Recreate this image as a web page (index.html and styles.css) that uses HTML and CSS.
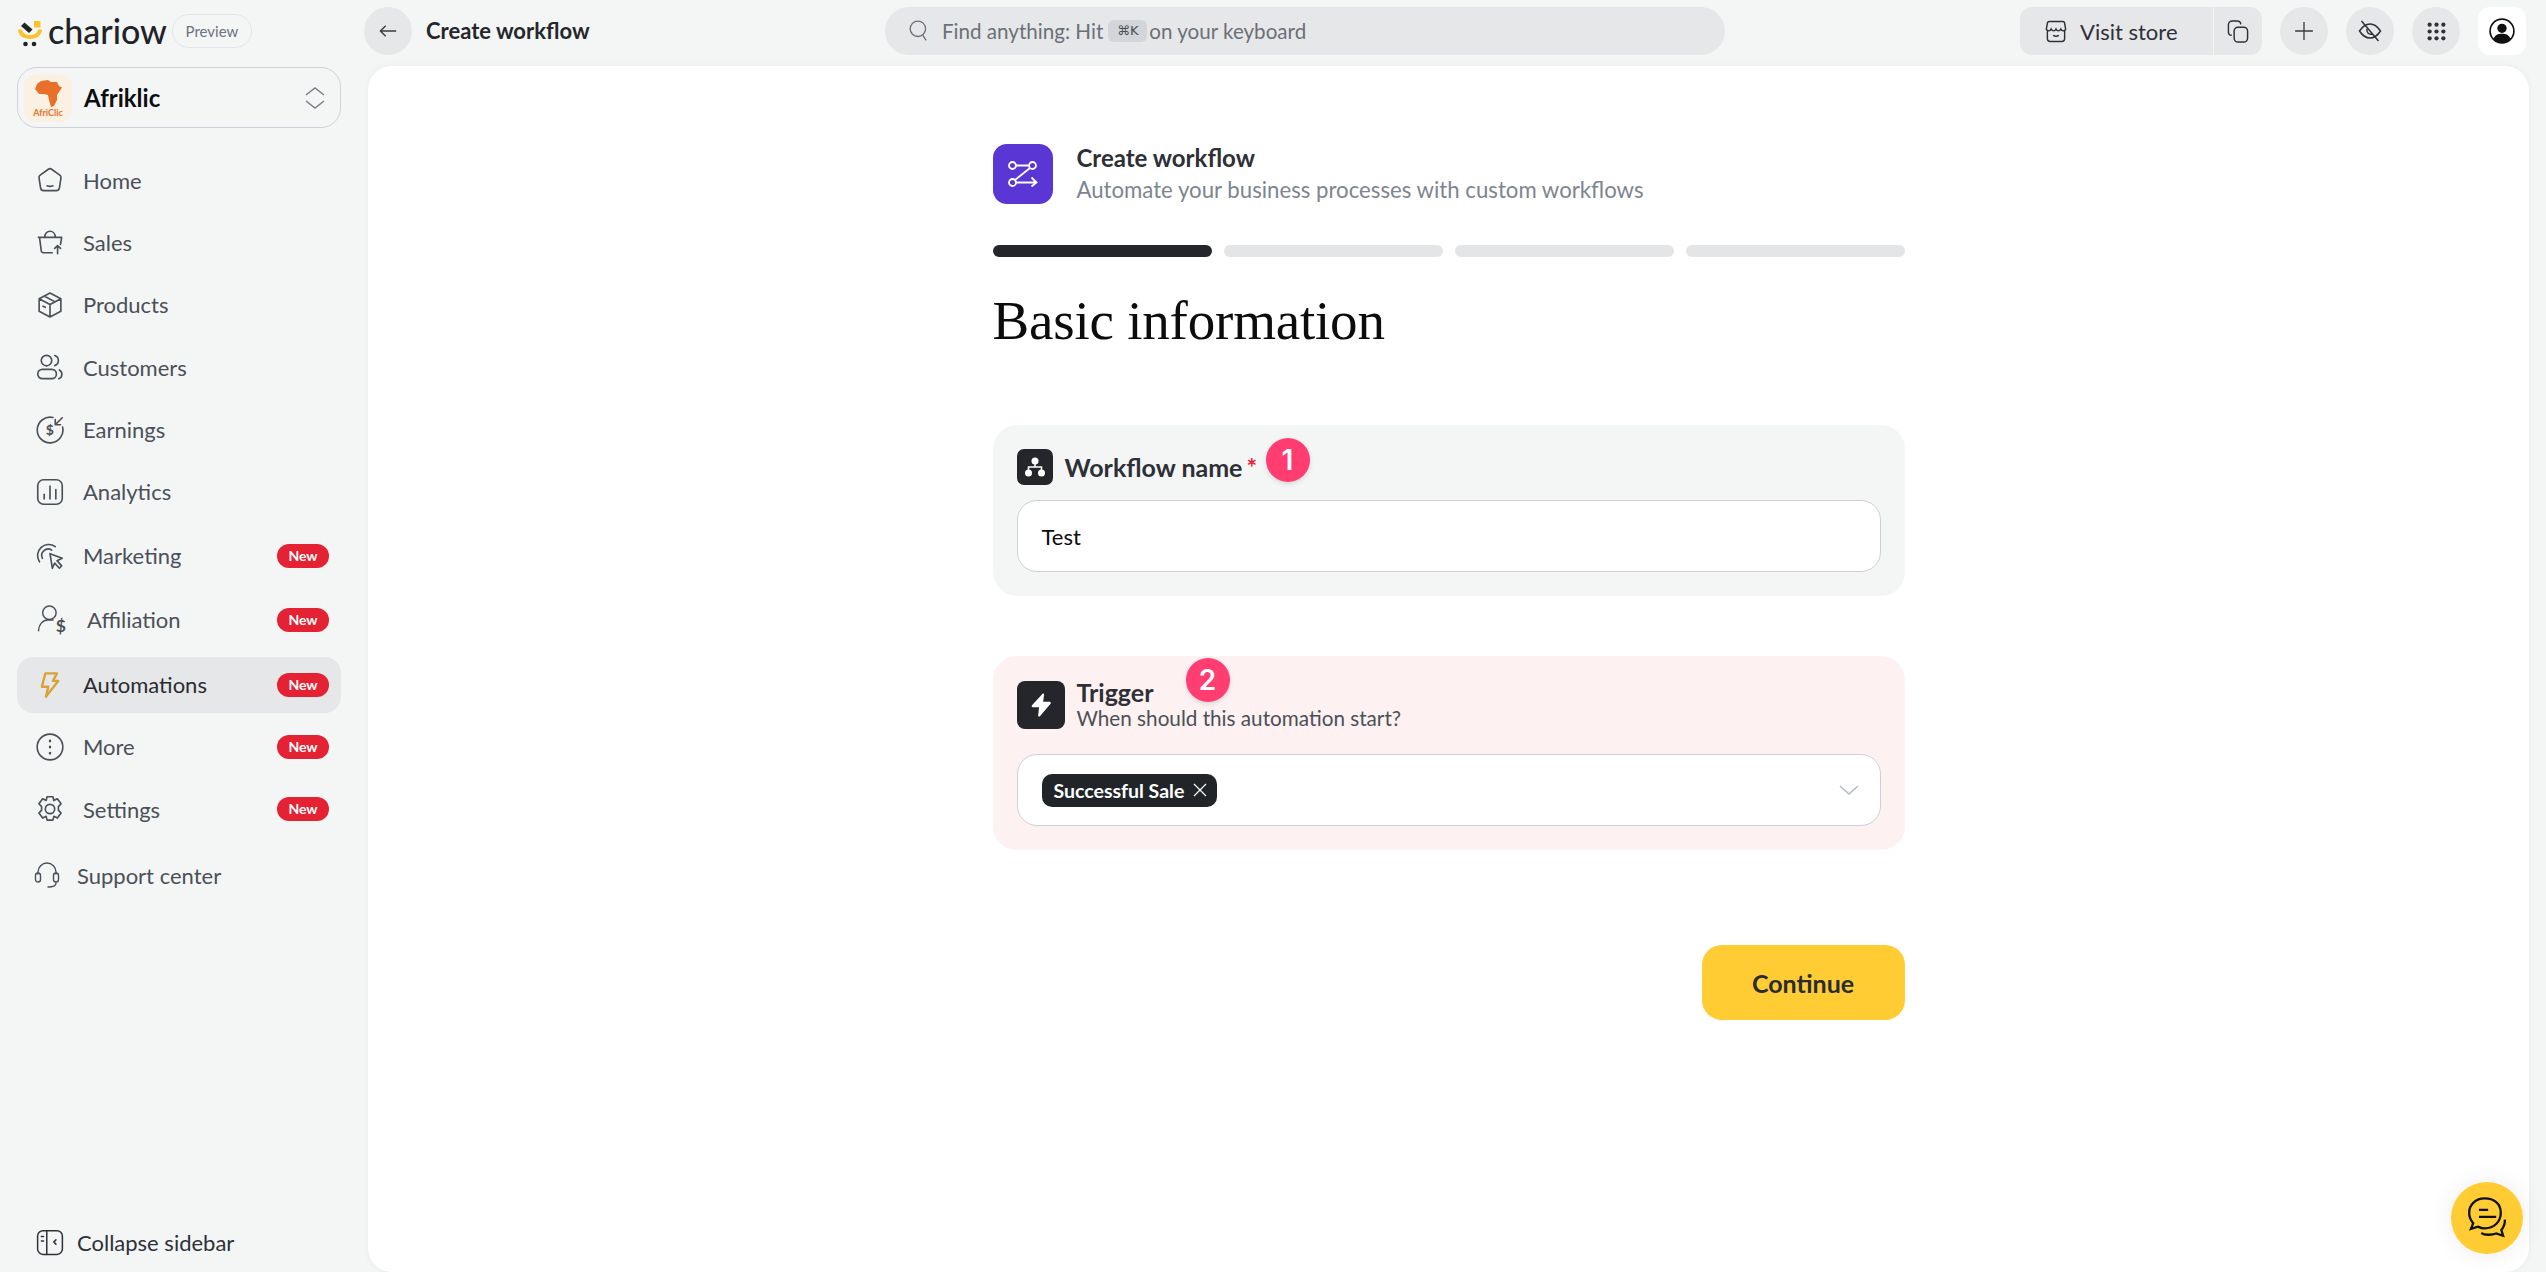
FILE: index.html
```html
<!DOCTYPE html>
<html>
<head>
  <title>Create workflow</title>
  <link rel="stylesheet" href="styles.css">
</head>
<body>
  <div class="app">
    <aside class="sidebar">
      <div class="brand">
        <svg class="brand-mark" viewBox="0 0 26 27">
          <path d="M1 9.500c.5 6 5 9.500 12 9.500s11.500-3.500 12-9.500h-4c-.5 3.500-3.500 5.500-8 5.500s-7.500-2-8-5.500z" fill="#fac32d"/>
          <rect x="17" y="1" width="6.500" height="6.500" fill="#fac32d"/>
          <path d="M4 6l3.500-3.500 8 7-3.500 3.500z" fill="#212327"/>
          <circle cx="8.500" cy="24" r="2.300" fill="#212327"/>
          <circle cx="17" cy="24" r="2.300" fill="#212327"/>
        </svg>
        <span class="brand-name">chariow</span>
        <span class="preview">Preview</span>
      </div>

      <div class="store-switch">
        <div class="store-logo">
          <svg viewBox="0 0 48 48" class="africa">
            <path d="M17 7l7-1 3 2 6 0 2 4 3 1.500-3 4.500-2 3v5l-3 6-3 1-2-7-1-5-4-1-5 0-4-5 2-5z" fill="#e8702a"/>
          </svg>
          <span class="store-logo-text">AfriClic</span>
        </div>
        <span class="store-name">Afriklic</span>
        <svg class="updown" viewBox="0 0 22 24"><path d="M2 9l9-7 9 7M2 15l9 7 9-7"/></svg>
      </div>

      <nav class="nav">
        <a class="nav-item">
          <svg class="icon" viewBox="0 0 24 24"><path d="M10.600 2.800a2.400 2.400 0 0 1 2.800 0l7 5a2.400 2.400 0 0 1 1 2.300l-1.300 8.600a2.800 2.800 0 0 1-2.800 2.400H6.700a2.800 2.800 0 0 1-2.800-2.400L2.600 10.100a2.400 2.400 0 0 1 1-2.300zM9.500 17q2.500 1 5 0"/></svg>
          <span>Home</span>
        </a>
        <a class="nav-item">
          <svg class="icon" viewBox="0 0 24 24"><path d="M2 8h20l-1 6M3 8l1.500 11.500a2 2 0 0 0 2 1.700H14M7.500 8c0-7 9-7 9 0M18.500 22v-7M16 17.500l2.500-2.500 2.500 2.500"/></svg>
          <span>Sales</span>
        </a>
        <a class="nav-item">
          <svg class="icon" viewBox="0 0 24 24"><path d="M12 1.800l9.300 4.800v10.800L12 22.200l-9.300-4.800V6.600zM2.700 6.600L12 11.500l9.300-4.900M12 11.500v10.700M7 4.300l9.300 5M6 13l2 1"/></svg>
          <span>Products</span>
        </a>
        <a class="nav-item">
          <svg class="icon" viewBox="0 0 24 24"><circle cx="9" cy="6.500" r="4.500"/><rect x="1.500" y="14" width="16" height="8" rx="4"/><path d="M16 2.200a4.500 4.500 0 0 1 0 8.600M20 14.500c3 1.500 3 6.500-.5 7.500"/></svg>
          <span>Customers</span>
        </a>
        <a class="nav-item">
          <svg class="icon" viewBox="0 0 24 24"><path d="M22.800 9.500A11 11 0 1 1 14.500 1.300M22.500 1.500L16.500 7.500M16.500 3v4.500H21"/><text x="11.800" y="16.500" class="icon-dollar">$</text></svg>
          <span>Earnings</span>
        </a>
        <a class="nav-item">
          <svg class="icon" viewBox="0 0 24 24"><rect x="1.500" y="1.500" width="21" height="21" rx="5"/><path d="M7 18v-4M12 18V7M17 18v-8"/></svg>
          <span>Analytics</span>
        </a>
        <a class="nav-item nav-item-marketing">
          <svg class="icon" viewBox="0 0 24 24"><path d="M12 10l10.500 4-4.500 2 4 4.500-2 2-4-4.500-2 4.500zM5.500 14a5.500 5.500 0 0 1 8-7M3 17a9.500 9.500 0 0 1 13.500-13"/></svg>
          <span>Marketing</span>
          <em class="badge">New</em>
        </a>
        <a class="nav-item nav-item-affiliation">
          <svg class="icon icon-wide" viewBox="0 0 30 28"><circle cx="12" cy="7.500" r="6.500"/><path d="M1.500 25c0-6 4-10.500 9-10.500h5"/><text x="23" y="26.500" class="icon-dollar-big">$</text></svg>
          <span>Affiliation</span>
          <em class="badge">New</em>
        </a>
        <a class="nav-item nav-item-active">
          <svg class="icon icon-bolt" viewBox="0 0 24 24"><path d="M8 2h10l-3.500 6.500H19L8.500 22l2-8.500H5z"/></svg>
          <span>Automations</span>
          <em class="badge">New</em>
        </a>
        <a class="nav-item">
          <svg class="icon" viewBox="0 0 24 24"><circle cx="12" cy="12" r="11"/><path d="M12 6.500v.5M12 11.800v.5M12 17v.5" class="thick"/></svg>
          <span>More</span>
          <em class="badge">New</em>
        </a>
        <a class="nav-item">
          <svg class="icon" viewBox="0 0 24 24"><circle cx="12" cy="12" r="4"/><path d="M9.500 1.500h5l.8 3.200 3-1.500 3.200 4.300-2.300 2.500v3l2.300 2.500-3.200 4.300-3-1.500-.8 3.200h-5l-.8-3.200-3 1.500-3.200-4.300 2.300-2.500v-3L2.500 7.500l3.200-4.300 3 1.500z"/></svg>
          <span>Settings</span>
          <em class="badge">New</em>
        </a>
        <a class="nav-item nav-item-support">
          <svg class="icon" viewBox="0 0 26 28"><path d="M4 13V11a9 9 0 0 1 18 0v2M22 22c0 3-3 4-8 4"/><rect x="1.500" y="12" width="5" height="9" rx="2.500"/><rect x="19.500" y="12" width="5" height="9" rx="2.500"/></svg>
          <span>Support center</span>
        </a>
      </nav>

      <a class="collapse">
        <svg class="icon" viewBox="0 0 26 24"><rect x="1.500" y="1.500" width="23" height="22" rx="5"/><path d="M10 1.500v22M5 7h2M5 11h2M18.500 10l-2 2 2 2"/></svg>
        <span>Collapse sidebar</span>
      </a>
    </aside>

    <div class="content">
      <header class="topbar">
        <button class="round back">
          <svg viewBox="0 0 16 12" class="tb-arrow"><path d="M15 6H1.500M6 1.500L1.500 6 6 10.500"/></svg>
        </button>
        <span class="top-title">Create workflow</span>
        <div class="search">
          <svg viewBox="0 0 18 20" class="tb-search"><circle cx="8" cy="8" r="7"/><path d="M12.500 14l3 4.500"/></svg>
          <span>Find anything: Hit</span>
          <kbd>⌘K</kbd>
          <span>on your keyboard</span>
        </div>
        <div class="store-group">
          <a class="visit">
            <svg viewBox="0 0 22 24" class="tb-store"><path d="M4 1.500h14a2 2 0 0 1 2 2L21 9c0 3-4 3-5 .5-1 2.500-4 2.500-5 0-1 2.500-4 2.500-5 0-1 2.500-5 2.500-5-.5l1-5.500a2 2 0 0 1 2-2zM2 10.500V20a3 3 0 0 0 3 2.500h12a3 3 0 0 0 3-2.500v-9.500M8 16q3 2 6 0"/></svg>
            <span>Visit store</span>
          </a>
          <a class="copy">
            <svg viewBox="0 0 22 24" class="tb-store"><path d="M4.500 16A3.500 3.500 0 0 1 1 12.500V5a4 4 0 0 1 4-4h5a4 4 0 0 1 4 3.500"/><rect x="7" y="7.500" width="14" height="15.500" rx="4"/></svg>
          </a>
        </div>
        <button class="round">
          <svg viewBox="0 0 18 18" class="tb-plus"><path d="M9 1v16M1 9h16"/></svg>
        </button>
        <button class="round">
          <svg viewBox="0 0 24 24" class="tb-eye"><path d="M1.500 12C6 5 10 5 12 5s6 0 10.500 7C18 19 14 19 12 19s-6 0-10.500-7z"/><path d="M3.500 2l17 20M9 10a4 4 0 0 0 5 5"/></svg>
        </button>
        <button class="round">
          <svg viewBox="0 0 18 18" class="tb-grid"><g><circle cx="2.500" cy="2.500" r="2"/><circle cx="9" cy="2.500" r="2"/><circle cx="15.500" cy="2.500" r="2"/><circle cx="2.500" cy="9" r="2"/><circle cx="9" cy="9" r="2"/><circle cx="15.500" cy="9" r="2"/><circle cx="2.500" cy="15.500" r="2"/><circle cx="9" cy="15.500" r="2"/><circle cx="15.500" cy="15.500" r="2"/></g></svg>
        </button>
        <div class="avatar">
          <svg viewBox="0 0 24 24" class="tb-avatar"><circle cx="12" cy="12" r="11" fill="#fff" stroke="#111" stroke-width="1.500"/><circle cx="12" cy="9.500" r="4.300" fill="#111"/><path d="M4 19.500c1.500-4 4.500-5 8-5s6.500 1 8 5A11 11 0 0 1 12 23a11 11 0 0 1-8-3.500z" fill="#111"/></svg>
        </div>
      </header>

      <main class="main">
        <div class="wizard">
          <div class="page-head">
            <div class="page-icon">
              <svg viewBox="0 0 30 26"><circle cx="4.500" cy="4.500" r="3.500"/><circle cx="24.500" cy="4.500" r="3.500"/><circle cx="4.500" cy="21.500" r="3.500"/><path d="M8 4.500h13M22 7L7 19M8 21.500h20M23.500 16.500l5 5-5 4"/></svg>
            </div>
            <div>
              <div class="page-title">Create workflow</div>
              <div class="page-sub">Automate your business processes with custom workflows</div>
            </div>
          </div>

          <div class="steps">
            <span class="step step-on"></span>
            <span class="step"></span>
            <span class="step"></span>
            <span class="step"></span>
          </div>

          <h1>Basic information</h1>

          <section class="card">
            <div class="field-head">
              <div class="field-icon">
                <svg viewBox="0 0 24 24"><circle cx="12" cy="6" r="3.500"/><circle cx="5.500" cy="18" r="3.500"/><circle cx="18.500" cy="18" r="3.500"/><path d="M12 8v4M5.500 15v-3h13v3" class="tree"/></svg>
              </div>
              <label class="field-label">Workflow name<i>*</i></label>
            </div>
            <div class="input">Test</div>
            <span class="marker marker-one">1</span>
          </section>

          <section class="card card-pink">
            <div class="trigger-head">
              <div class="trigger-icon">
                <svg viewBox="0 0 24 24"><path d="M13.500 1.500c.8-.5 1.500 0 1.300 1L14 9h6c1 0 1.500 1 .8 1.800L11 22.300c-.7.7-1.800.2-1.600-.8l.8-7.500H4.500c-1 0-1.500-1-.8-1.800z"/></svg>
              </div>
              <div>
                <div class="trigger-title">Trigger</div>
                <div class="trigger-sub">When should this automation start?</div>
              </div>
            </div>
            <div class="input input-select">
              <span class="chip">Successful Sale
                <svg viewBox="0 0 14 14"><path d="M1 1l12 12M13 1L1 13"/></svg>
              </span>
              <svg class="chevron" viewBox="0 0 20 10"><path d="M1 1l9 8 9-8"/></svg>
            </div>
            <span class="marker marker-two">2</span>
          </section>

          <div class="actions">
            <button class="continue">Continue</button>
          </div>
        </div>

        <button class="chat">
          <svg viewBox="0 0 40 40"><path d="M18 3C10 3 4.500 8.500 4.500 15.500c0 3.500 1.300 6.500 3.500 9l-2 5 6-2c2 1 4 1.500 6 1.500 8 0 14-5.500 14-13.500S26 3 18 3zM13 13h8M13 19h15"/><path d="M15 33c3 2 9 2 13 .5l6 2-1.500-5c2-2.500 3.500-5 3-9"/></svg>
        </button>
      </main>
    </div>
  </div>
</body>
</html>
```

FILE: styles.css
```css
* {
  box-sizing: border-box;
}

body {
  margin: 0;
  height: 1272px;
  overflow: hidden;
  font-family: Lato, "Noto Sans", sans-serif;
  background-color: #f4f6f6;
  color: #4b5058;
}

button {
  font-family: inherit;
  border: none;
  padding: 0;
  cursor: pointer;
}

.app {
  display: flex;
  height: 1272px;
}

/* sidebar */
.sidebar {
  width: 368px;
  flex-shrink: 0;
  display: flex;
  flex-direction: column;
  padding: 14px 27px 17px 17px;
}

.brand {
  display: flex;
  align-items: center;
  height: 34px;
}

.brand-mark {
  width: 26px;
  height: 27px;
  margin-top: 4px;
}

.brand-name {
  font-size: 34px;
  font-weight: 500;
  line-height: 34px;
  color: #212327;
  margin-left: 5px;
}

.preview {
  margin-left: 5px;
  width: 80px;
  height: 34px;
  border: 1px solid #e3e5e7;
  border-radius: 17px;
  font-size: 15px;
  line-height: 32px;
  text-align: center;
  color: #6b7280;
}

.store-switch {
  display: flex;
  align-items: center;
  margin-top: 19px;
  height: 61px;
  padding: 0 14px 0 6px;
  border: 1px solid #cfd2da;
  border-radius: 20px;
}

.store-logo {
  width: 48px;
  height: 48px;
  position: relative;
  border-radius: 12px;
  background-color: #faf1e2;
  overflow: hidden;
}

.africa {
  width: 48px;
  height: 48px;
  display: block;
}

.store-logo-text {
  position: absolute;
  left: 0;
  right: 0;
  bottom: 4px;
  font-size: 9px;
  font-weight: 700;
  text-align: center;
  color: #e8702a;
}

.store-name {
  flex: 1;
  margin-left: 12px;
  font-size: 24px;
  font-weight: 700;
  color: #0d0e10;
}

.updown {
  width: 22px;
  height: 24px;
  fill: none;
  stroke: #7b8087;
  stroke-width: 1.500;
}

.nav {
  margin-top: 24px;
}

.nav-item {
  display: flex;
  align-items: center;
  height: 56px;
  margin-bottom: 6.400px;
  padding: 0 12px 0 19px;
  border-radius: 16px;
  font-size: 22px;
  color: #4b5058;
}

.nav-item span {
  flex: 1;
  margin-left: 19px;
}

.icon {
  width: 28px;
  height: 28px;
  flex-shrink: 0;
  fill: none;
  stroke: #4b5058;
  stroke-width: 1.400;
  stroke-linecap: round;
  stroke-linejoin: round;
}

.icon .thick {
  stroke-width: 2;
}

.icon-dollar {
  font-family: Lato, sans-serif;
  font-size: 12px;
  font-weight: 700;
  text-anchor: middle;
  fill: #4b5058;
  stroke: none;
}

.icon-dollar-big {
  font-family: Lato, sans-serif;
  font-size: 17px;
  font-weight: 700;
  text-anchor: middle;
  fill: #4b5058;
  stroke: none;
}

.icon-wide {
  width: 31px;
  height: 31px;
  margin-left: 1px;
}

.icon-bolt {
  stroke: #d9a236;
  stroke-width: 2;
}

.nav-item-marketing {
  margin-top: 7.600px;
  margin-bottom: 8px;
}

.nav-item-affiliation {
  margin-bottom: 9px;
}

.nav-item-active {
  background-color: #e6e7e9;
  color: #2a2c31;
}

.nav-item-support {
  margin-top: 10px;
  padding-left: 16px;
}

.nav-item-support span {
  margin-left: 16px;
}

.badge {
  width: 52px;
  height: 24px;
  border-radius: 12px;
  background-color: #e42233;
  color: #ffffff;
  font-size: 14px;
  font-weight: 700;
  font-style: normal;
  line-height: 24px;
  text-align: center;
}

.collapse {
  display: flex;
  align-items: center;
  margin-top: auto;
  padding-left: 19px;
  height: 26px;
  font-size: 22px;
  color: #2e3138;
}

.collapse .icon {
  stroke: #2e3138;
}

.collapse span {
  margin-left: 13px;
}

/* top bar */
.content {
  flex: 1;
  display: flex;
  flex-direction: column;
  min-width: 0;
  padding-right: 17px;
}

.topbar {
  height: 66px;
  flex-shrink: 0;
  display: flex;
  align-items: flex-start;
  padding-top: 7px;
}

.round {
  width: 48px;
  height: 48px;
  border-radius: 50%;
  background-color: #e6e7e9;
  margin-left: 18px;
  display: flex;
  align-items: center;
  justify-content: center;
  flex-shrink: 0;
}

.back {
  margin-left: -4px;
}

.tb-arrow {
  width: 20px;
  height: 14px;
  fill: none;
  stroke: #3a3d43;
  stroke-width: 1.200;
}

.top-title {
  width: 459px;
  margin-left: 14px;
  font-size: 22px;
  font-weight: 700;
  line-height: 48px;
  color: #25272c;
}

.search {
  width: 840px;
  height: 48px;
  display: flex;
  align-items: center;
  padding-left: 24px;
  border-radius: 24px;
  background-color: #e6e7e9;
  font-size: 20.600px;
  color: #6b7078;
}

.tb-search {
  width: 20px;
  height: 22px;
  margin-right: 13px;
  fill: none;
  stroke: #6b7078;
  stroke-width: 1.200;
}

kbd {
  font-family: "DejaVu Sans", sans-serif;
  font-size: 13px;
  width: 39px;
  height: 22px;
  margin: 0 2px 0 5px;
  line-height: 22px;
  border-radius: 6px;
  background-color: #d2d5d9;
  text-align: center;
  color: #4b5058;
}

.store-group {
  display: flex;
  height: 48px;
  margin-left: 295px;
}

.visit {
  width: 193px;
  display: flex;
  align-items: center;
  padding-left: 25px;
  border-radius: 12px 0 0 12px;
  background-color: #e6e7e9;
  font-size: 22px;
  color: #2e3138;
}

.visit span {
  margin-left: 13px;
}

.tb-store {
  width: 22px;
  height: 23px;
  fill: none;
  stroke: #2e3138;
  stroke-width: 1.500;
}

.copy {
  width: 48px;
  margin-left: 1px;
  display: flex;
  align-items: center;
  justify-content: center;
  border-radius: 0 12px 12px 0;
  background-color: #e6e7e9;
}

.tb-plus {
  width: 20px;
  height: 20px;
  fill: none;
  stroke: #3a3d43;
  stroke-width: 1.200;
}

.tb-eye {
  width: 24px;
  height: 24px;
  fill: none;
  stroke: #2e3138;
  stroke-width: 1.500;
}

.tb-grid {
  width: 19px;
  height: 19px;
  fill: #2e3138;
}

.avatar {
  width: 48px;
  height: 48px;
  margin-left: 18px;
  border-radius: 12px;
  background-color: #ffffff;
  display: flex;
  align-items: center;
  justify-content: center;
}

.tb-avatar {
  width: 26px;
  height: 26px;
}

/* main panel */
.main {
  flex: 1;
  position: relative;
  background-color: #ffffff;
  border-radius: 24px;
  box-shadow: 0 0 6px rgba(0, 0, 0, 0.05);
  padding-top: 78px;
}

.wizard {
  width: 912px;
  margin: 0 auto;
}

.page-head {
  display: flex;
  align-items: center;
  height: 60px;
}

.page-icon {
  width: 60px;
  height: 60px;
  margin-right: 24px;
  border-radius: 14px;
  background-color: #5a37d5;
  display: flex;
  align-items: center;
  justify-content: center;
}

.page-icon svg {
  width: 30px;
  height: 26px;
  fill: none;
  stroke: #ffffff;
  stroke-width: 1.800;
}

.page-title {
  font-size: 24px;
  font-weight: 700;
  line-height: 32px;
  color: #2e3036;
}

.page-sub {
  font-size: 22.200px;
  line-height: 32px;
  color: #7d8590;
}

.steps {
  display: flex;
  gap: 12px;
  margin-top: 41px;
}

.step {
  flex: 1;
  height: 12px;
  border-radius: 6px;
  background-color: #e4e5e7;
}

.step-on {
  background-color: #25262b;
}

h1 {
  margin: 32px 0 72px;
  font-family: "Liberation Serif", serif;
  font-size: 55px;
  font-weight: 400;
  letter-spacing: -0.2px;
  line-height: 64px;
  color: #0c0c0e;
}

.card {
  position: relative;
  padding: 24px;
  border-radius: 24px;
  background-color: #f4f6f6;
  margin-bottom: 60px;
}

.card-pink {
  padding-top: 25px;
  background-color: #fdf1f1;
  margin-bottom: 95px;
}

.field-head {
  display: flex;
  align-items: center;
  margin-bottom: 15px;
}

.field-icon {
  width: 36px;
  height: 36px;
  border-radius: 7px;
  background-color: #25262b;
  display: flex;
  align-items: center;
  justify-content: center;
}

.field-icon svg {
  width: 24px;
  height: 24px;
  fill: #ffffff;
}

.field-icon .tree {
  fill: none;
  stroke: #ffffff;
  stroke-width: 1.500;
}

.field-label {
  margin-left: 12px;
  font-size: 25px;
  font-weight: 700;
  color: #2e3036;
}

.field-label i {
  margin-left: 4px;
  font-style: normal;
  color: #e42233;
}

.input {
  height: 72px;
  padding: 0 24px;
  display: flex;
  align-items: center;
  border: 1.500px solid #cdd0db;
  border-radius: 20px;
  background-color: #ffffff;
  font-size: 22px;
  color: #0c0c0e;
}

.input-select {
  justify-content: space-between;
  padding-right: 21px;
}

.marker {
  position: absolute;
  width: 44px;
  height: 44px;
  border-radius: 50%;
  background-color: #ff3d71;
  box-shadow: 0 2px 5px rgba(0, 0, 0, 0.12);
  font-family: Inter, sans-serif;
  font-size: 28px;
  font-weight: 600;
  line-height: 44px;
  text-align: center;
  color: #ffffff;
}

.marker-one {
  left: 273px;
  top: 13px;
}

.marker-two {
  left: 193px;
  top: 2px;
}

.trigger-head {
  display: flex;
  align-items: center;
  height: 48px;
  margin-bottom: 25px;
}

.trigger-icon {
  width: 48px;
  height: 48px;
  margin-right: 12px;
  border-radius: 8px;
  background-color: #25262b;
  display: flex;
  align-items: center;
  justify-content: center;
}

.trigger-icon svg {
  width: 26px;
  height: 26px;
  fill: #ffffff;
}

.trigger-title {
  font-size: 25px;
  font-weight: 700;
  line-height: 26px;
  color: #2e3036;
}

.trigger-sub {
  font-size: 20.700px;
  line-height: 26px;
  color: #4b5058;
}

.chip {
  width: 175px;
  height: 33px;
  display: flex;
  align-items: center;
  justify-content: space-between;
  padding: 0 10px 0 12px;
  border-radius: 10px;
  background-color: #212529;
  font-size: 19.500px;
  font-weight: 700;
  color: #ffffff;
}

.chip svg {
  width: 14px;
  height: 14px;
  fill: none;
  stroke: #ffffff;
  stroke-width: 1.200;
}

.chevron {
  width: 20px;
  height: 10px;
  fill: none;
  stroke: #b3b9c4;
  stroke-width: 1.500;
}

.actions {
  display: flex;
  justify-content: flex-end;
}

.continue {
  width: 203px;
  height: 75px;
  border-radius: 20px;
  background-color: #ffcc33;
  font-size: 25px;
  font-weight: 700;
  color: #2a2c31;
}

.chat {
  position: absolute;
  right: 6px;
  bottom: 18px;
  width: 72px;
  height: 72px;
  border-radius: 50%;
  background-color: #ffcc33;
  box-shadow: 0 0 24px rgba(0, 0, 0, 0.08);
  display: flex;
  align-items: center;
  justify-content: center;
}

.chat svg {
  width: 46px;
  height: 46px;
  fill: none;
  stroke: #111111;
  stroke-width: 2;
}
```
